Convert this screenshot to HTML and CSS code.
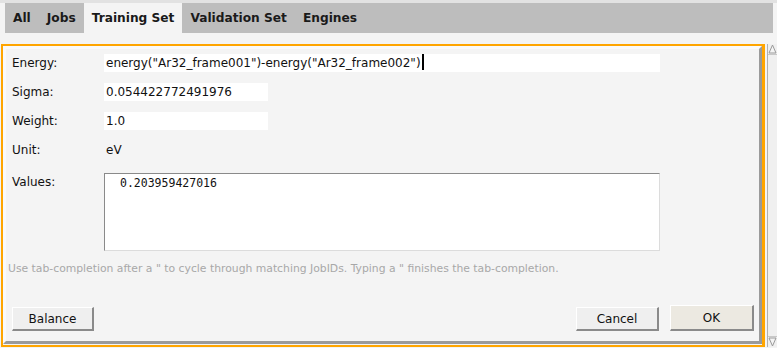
FILE: index.html
```html
<!DOCTYPE html>
<html lang="en">
<head>
  <meta charset="UTF-8" />
  <title>Training Set - Edit Item</title>
  <link rel="stylesheet" href="styles.css">
</head>
<body>

  <div class="tabs">
    <div class="tab">All</div>
    <div class="tab">Jobs</div>
    <div class="tab active">Training Set</div>
    <div class="tab">Validation Set</div>
    <div class="tab">Engines</div>
  </div>

  <div class="main">
    <div class="dialog">
      <div class="panel">
        <div class="form">
          <div class="label">Energy:</div>
          <div class="entry wide">energy("Ar32_frame001")-energy("Ar32_frame002")<span class="caret"></span></div>

          <div class="label">Sigma:</div>
          <div class="entry">0.054422772491976</div>

          <div class="label">Weight:</div>
          <div class="entry">1.0</div>

          <div class="label">Unit:</div>
          <div class="value">eV</div>

          <div class="label top">Values:</div>
          <div class="textbox">0.203959427016</div>
        </div>

        <p class="hint">Use tab-completion after a " to cycle through matching JobIDs. Typing a " finishes the tab-completion.</p>

        <div class="buttons">
          <button class="btn balance">Balance</button>
          <div class="spacer"></div>
          <button class="btn">Cancel</button>
          <button class="btn default">OK</button>
        </div>
      </div>
    </div>

    <!-- scrollbar of the outer window -->
    <div class="scrollbar">
      <svg width="9" height="10" viewBox="0 0 9 10">
        <polygon points="4.5,1 8,9 1,9" fill="#f4f4f4" stroke="#9a9a9a" />
      </svg>
      <div class="track"></div>
      <svg width="9" height="10" viewBox="0 0 9 10">
        <polygon points="1,1 8,1 4.5,9" fill="#f4f4f4" stroke="#9a9a9a" />
      </svg>
    </div>
  </div>

</body>
</html>
```

FILE: styles.css
```css
body {
  margin: 0;
  width: 777px;
  height: 348px;
  overflow: hidden;
  background: #f4f4f4;
  border-top: 3px solid #e2e2e2;
  box-sizing: border-box;
  font-family: "DejaVu Sans", Verdana, sans-serif;
  font-size: 12px;
  color: #111;
}

.tabs {
  display: flex;
  height: 30px;
  margin: 0 4px 0 5px;
  background: #bdbdbd;
}

.tab {
  padding: 0 8px;
  line-height: 30px;
  font-size: 12.2px;
  font-weight: bold;
  color: #1a1a1a;
}

.tab.active {
  background: #f4f4f4;
  height: 31px;
}

.main {
  display: flex;
  margin-top: 11px;
  padding-left: 1px;
  height: 303px;
}

.dialog {
  width: 765px;
  box-sizing: border-box;
  border: 2px solid #ffa500;
  border-right-width: 3px;
  padding-bottom: 1px;
}

.panel {
  height: 100%;
  box-sizing: border-box;
  border: 3px solid;
  border-color: #fafafa #9a9a9a #9a9a9a #fafafa;
  padding: 5px 5px 10px 0;
  display: flex;
  flex-direction: column;
}

.form {
  display: grid;
  grid-template-columns: 98px 556px;
  grid-template-rows: 18px 18px 18px 18px 81px;
  row-gap: 11px;
}

.label {
  padding-left: 6px;
  align-self: center;
}

.label.top {
  align-self: start;
  margin-top: 5px;
}

.entry {
  background: #fff;
  padding-left: 2px;
  line-height: 18px;
  width: 162px;
  white-space: nowrap;
}

.entry.wide {
  width: auto;
}

.caret {
  display: inline-block;
  width: 2px;
  height: 16px;
  background: #000;
  vertical-align: -3px;
  margin-left: 1px;
}

.value {
  padding-left: 2px;
  align-self: center;
}

.textbox {
  margin-top: 3px;
  background: #fff;
  border: 1px solid;
  border-color: #8a8a8a #dcdcdc #dcdcdc #8a8a8a;
  padding: 2px 0 0 15px;
  font-family: "DejaVu Sans Mono", monospace;
  font-size: 11.5px;
}

.hint {
  margin: 11px 0 0 2px;
  font-size: 10.8px;
  line-height: 13px;
  color: #a8a8a8;
  white-space: nowrap;
}

.buttons {
  display: flex;
  align-items: flex-end;
  margin-top: auto;
  padding-left: 6px;
}

.spacer {
  flex: 1;
}

.btn {
  font-family: inherit;
  font-size: 12px;
  color: #111;
  height: 24px;
  width: 83px;
  padding: 0;
  background: #efefef;
  border: 1px solid;
  border-color: #fff #8a8a8a #8a8a8a #fff;
  border-width: 1px 2px 2px 1px;
}

.btn.balance {
  width: 82px;
}

.btn.default {
  margin-left: 11px;
  width: 84px;
  height: 26px;
  background: #ece9e1;
}

.scrollbar {
  margin-left: 2px;
  width: 9px;
  display: flex;
  flex-direction: column;
  border-left: 1px solid #b0b0b0;
  background: #f0f0f0;
}

.scrollbar svg {
  display: block;
}

.track {
  flex: 1;
  border-top: 1px solid #c8c8c8;
  border-bottom: 1px solid #c8c8c8;
}
```
